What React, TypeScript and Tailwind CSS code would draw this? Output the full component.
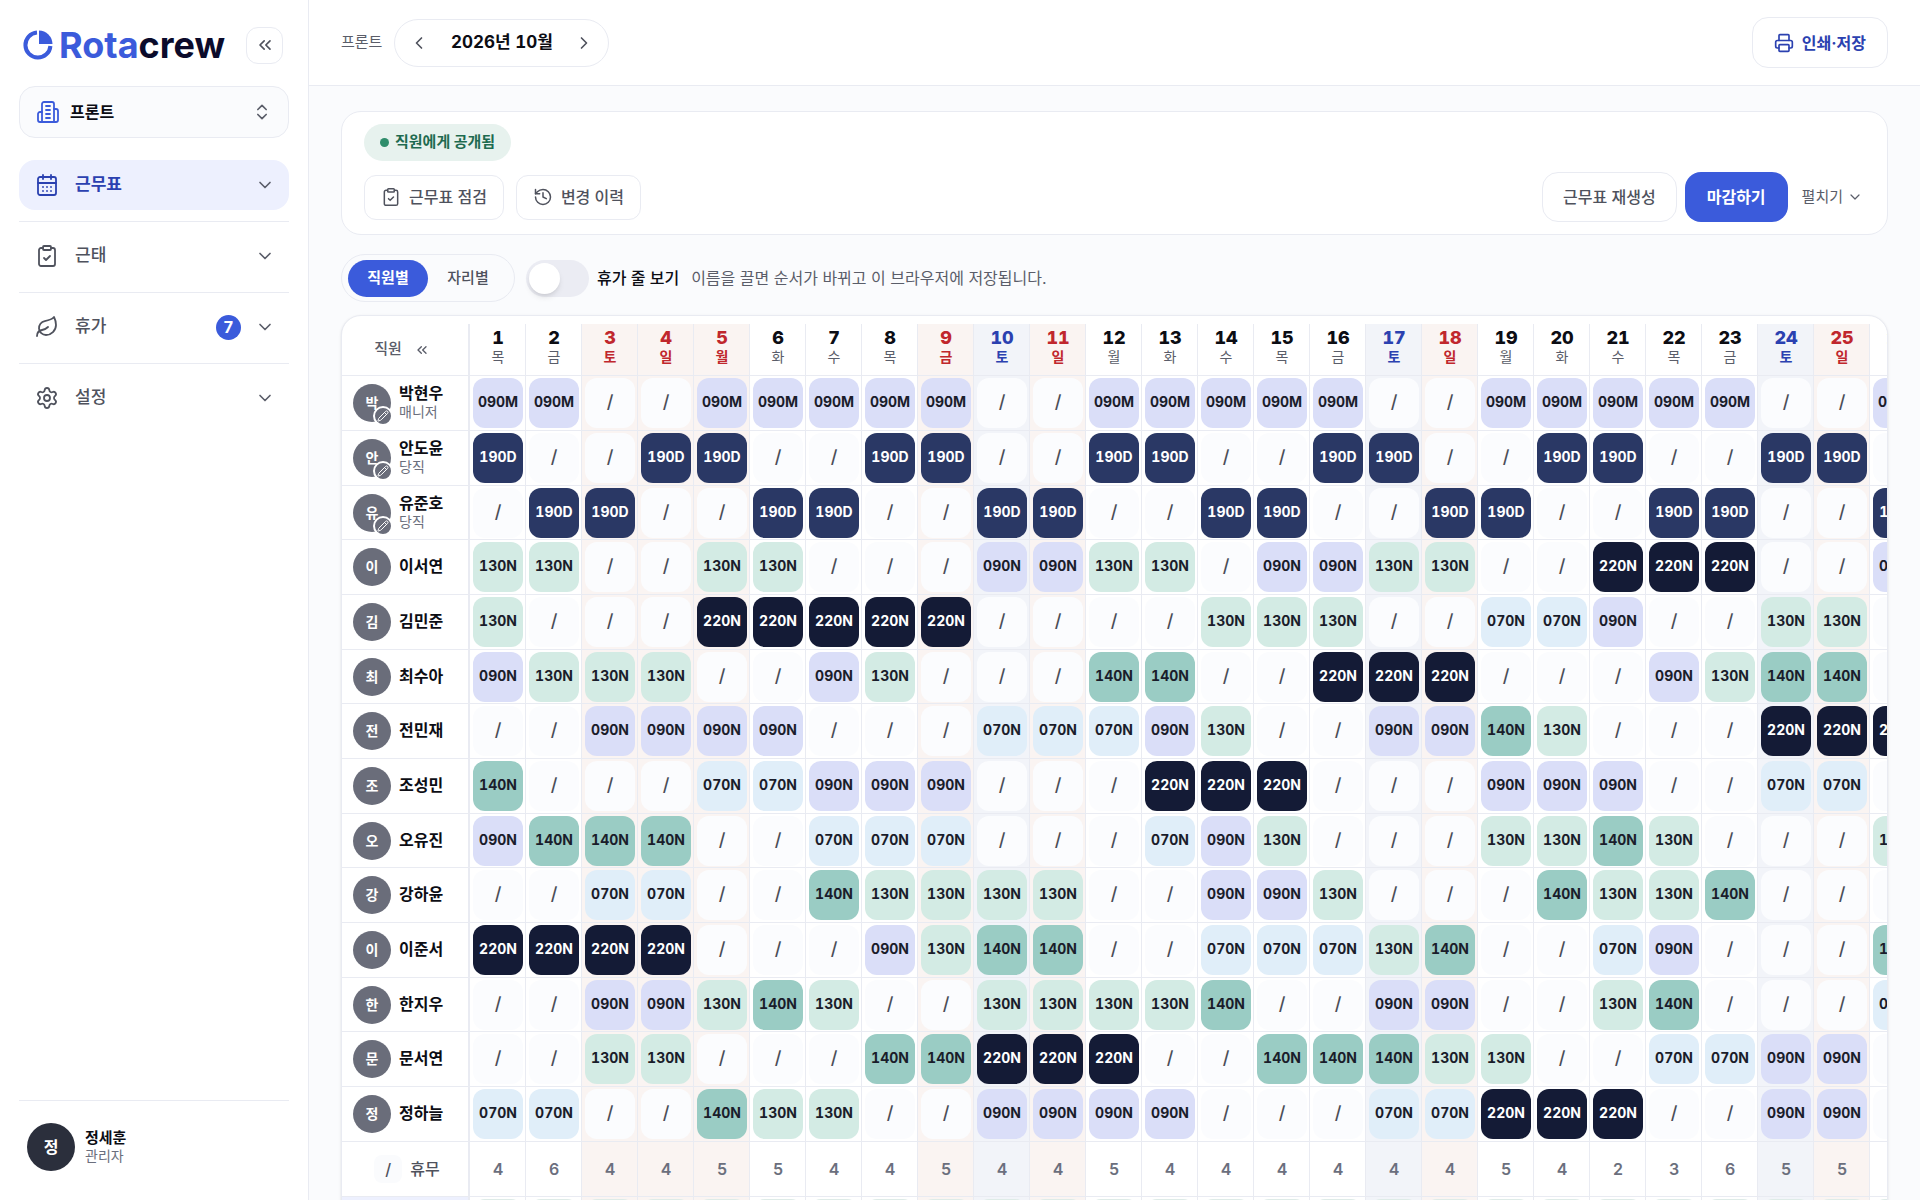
import { useState } from "react";
import clsx from "clsx";
import {
  CalendarDays,
  ChevronDown,
  ChevronLeft,
  ChevronRight,
  ChevronsLeft,
  ChevronsUpDown,
  ClipboardCheck,
  History,
  Leaf,
  Pencil,
  Printer,
  Settings,
} from "lucide-react";

const SHIFTS: Record<string, { code: string; className: string }> = {
  ".": { code: "/", className: "bg-[#fbfcfe] text-lg font-medium text-[#4b4e58]" },
  M: { code: "090M", className: "bg-[#dadef8] text-sm font-bold text-[#1a1d2b]" },
  "9": { code: "090N", className: "bg-[#dadef8] text-sm font-bold text-[#1a1d2b]" },
  "7": { code: "070N", className: "bg-[#e0eef9] text-sm font-bold text-[#1a1d2b]" },
  "3": { code: "130N", className: "bg-[#d3ebe4] text-sm font-bold text-[#1a1d2b]" },
  "4": { code: "140N", className: "bg-[#9accc4] text-sm font-bold text-[#1a1d2b]" },
  D: { code: "190D", className: "bg-[#2a3865] text-sm font-bold text-white" },
  "2": { code: "220N", className: "bg-[#141b36] text-sm font-bold text-white" },
};

const STAFF = [
  { name: "박현우", role: "매니저", shifts: "MM..MMMMM..MMMMM..MMMMM..M" },
  { name: "안도윤", role: "당직", shifts: "D..DD..DD..DD..DD..DD..DD." },
  { name: "유준호", role: "당직", shifts: ".DD..DD..DD..DD..DD..DD..D" },
  { name: "이서연", shifts: "33..33...9933.9933..222..9" },
  { name: "김민준", shifts: "3...22222....333..779..33." },
  { name: "최수아", shifts: "9333..93...44..222...9344." },
  { name: "전민재", shifts: "..9999...77793..9943...222" },
  { name: "조성민", shifts: "4...77999...222...999..77." },
  { name: "오유진", shifts: "9444..777...793...3343...3" },
  { name: "강하윤", shifts: "..77..43333..993...4334..." },
  { name: "이준서", shifts: "2222...9344..77734..79...4" },
  { name: "한지우", shifts: "..99343..33334..99..34...7" },
  { name: "문서연", shifts: "..33...44222..44433..7799." },
  { name: "정하늘", shifts: "77..433..9999...77222..99." },
];

const OFF_COUNTS = "46445544544544444454236555".split("");

const WEEKDAYS = ["목", "금", "토", "일", "월", "화", "수"];
const HOLIDAYS = [3, 4, 5, 9, 11, 18, 25];
const SATURDAYS = [10, 17, 24];
const DAYS = Array.from({ length: 26 }, (_, i) => i + 1);

const NAV = [
  { label: "근무표", icon: CalendarDays, active: true },
  { label: "근태", icon: ClipboardCheck },
  { label: "휴가", icon: Leaf, badge: 7 },
  { label: "설정", icon: Settings },
];

function dayTint(day: number) {
  if (HOLIDAYS.includes(day)) return "bg-[#faf4f2]";
  if (SATURDAYS.includes(day)) return "bg-[#f2f4f9]";
  return "bg-white";
}

function LogoMark() {
  return (
    <svg viewBox="0 0 30 30" className="size-[30px] shrink-0" aria-hidden="true">
      <path d="M14 2.6A12.5 12.5 0 1 0 27.4 16" fill="none" stroke="#3b5bdb" strokeWidth="4" />
      <path d="M16 0.5A14 14 0 0 1 29.5 14H16Z" fill="#3b5bdb" />
    </svg>
  );
}

function BuildingIcon() {
  return (
    <svg
      viewBox="0 0 24 24"
      className="size-6 shrink-0 text-[#3b5bdb]"
      fill="none"
      stroke="currentColor"
      strokeWidth="1.8"
      strokeLinecap="round"
      strokeLinejoin="round"
      aria-hidden="true"
    >
      <path d="M6 22V4a2 2 0 0 1 2-2h8a2 2 0 0 1 2 2v18Z" />
      <path d="M6 12H4a2 2 0 0 0-2 2v6a2 2 0 0 0 2 2h2" />
      <path d="M18 9h2a2 2 0 0 1 2 2v9a2 2 0 0 1-2 2h-2" />
      <path d="M10 6h4M10 10h4M10 14h4M10 18h4" />
    </svg>
  );
}

function Sidebar() {
  return (
    <aside className="flex w-[309px] shrink-0 flex-col border-r border-[#e9ebf2] bg-white px-[19px]">
      <div className="flex h-[86px] items-center justify-between pt-1 pr-1.5 pl-1">
        <a href="#" className="flex items-center gap-1.5">
          <LogoMark />
          <span className="text-4xl font-bold text-[#0b0b2b]">
            <span className="text-[#3b5bdb]">Rota</span>crew
          </span>
        </a>
        <button
          type="button"
          aria-label="사이드바 접기"
          className="flex size-[37px] shrink-0 items-center justify-center rounded-xl border border-[#e9ebf2] text-[#4f525d]"
        >
          <ChevronsLeft size={20} strokeWidth={2} />
        </button>
      </div>

      <label className="flex h-[52px] items-center gap-2.5 rounded-2xl border border-[#e9ebf2] bg-[#fafbfd] px-4">
        <BuildingIcon />
        <select
          aria-label="부서"
          className="min-w-0 flex-1 appearance-none bg-transparent text-base font-bold text-[#0c0d14]"
        >
          <option>프론트</option>
        </select>
        <ChevronsUpDown size={20} strokeWidth={2} className="text-[#5a5d69]" />
      </label>

      <nav className="mt-[22px]">
        {NAV.map(({ label, icon: Icon, active, badge }) => (
          <div key={label} className="mb-[11px] border-t border-[#e9ebf2] pt-[9px] first:border-0 first:pt-0">
            <button
              type="button"
              className={clsx(
                "flex h-[50px] w-full items-center rounded-2xl px-4 text-[17px]",
                active ? "bg-[#edf0fe] font-bold text-[#2b41b0]" : "font-medium text-[#4f525d]",
              )}
            >
              <Icon size={24} strokeWidth={1.8} />
              <span className="ml-4 flex-1 text-left">{label}</span>
              {badge && (
                <span className="mr-3.5 flex size-[25px] items-center justify-center rounded-full bg-[#3b5bdb] text-base font-bold text-white">
                  {badge}
                </span>
              )}
              <ChevronDown size={20} strokeWidth={2} className="mr-[-2px] text-[#5a5d69]" />
            </button>
          </div>
        ))}
      </nav>

      <div className="mt-auto flex h-[100px] items-center gap-2.5 border-t border-[#e9ebf2] px-2 pb-2">
        <span className="flex size-12 items-center justify-center rounded-full bg-[#2b2f3c] text-base font-bold text-white">
          정
        </span>
        <span className="flex flex-col">
          <span className="text-[15px]/[18px] font-bold text-[#0c0d14]">정세훈</span>
          <span className="text-sm/[18px] text-[#6b6f7d]">관리자</span>
        </span>
      </div>
    </aside>
  );
}

function Topbar() {
  return (
    <header className="flex h-[86px] shrink-0 items-center border-b border-[#e9ebf2] bg-white px-8">
      <span className="text-[15px] text-[#5a5d69]">프론트</span>
      <div className="ml-3 flex h-12 items-center rounded-full border border-[#e9ebf2] px-3.5">
        <button type="button" aria-label="이전 달" className="text-[#4f525d]">
          <ChevronLeft size={20} strokeWidth={2} />
        </button>
        <span className="w-[145px] text-center text-[17px] font-bold text-[#0c0d14] tabular-nums">
          2026년 10월
        </span>
        <button type="button" aria-label="다음 달" className="text-[#4f525d]">
          <ChevronRight size={20} strokeWidth={2} />
        </button>
      </div>
      <button
        type="button"
        className="ml-auto flex h-[51px] items-center gap-2 rounded-2xl border border-[#e9ebf2] px-[21px] text-base font-bold text-[#2b41b0]"
      >
        <Printer size={20} strokeWidth={2} />
        인쇄·저장
      </button>
    </header>
  );
}

function StatusCard() {
  const small =
    "flex h-[45px] items-center gap-2 rounded-xl border border-[#e9ebf2] px-4 text-base font-medium text-[#4f525d]";
  return (
    <section className="rounded-[20px] border border-[#e9ebf2] bg-white px-[22px] py-3">
      <div className="flex">
        <div className="flex h-[37px] items-center gap-1.5 rounded-full bg-[#e7f2ee] px-4 text-[15px] font-bold text-[#1e6b50]">
          <span className="size-[9px] rounded-full bg-[#2f8d6b]" />
          직원에게 공개됨
        </div>
      </div>
      <div className="mt-[11px] flex items-center justify-between">
        <div className="flex gap-3">
          <button type="button" className={small}>
            <ClipboardCheck size={20} strokeWidth={1.8} />
            근무표 점검
          </button>
          <button type="button" className={small}>
            <History size={20} strokeWidth={1.8} />
            변경 이력
          </button>
        </div>
        <div className="flex items-center gap-2">
          <button
            type="button"
            className="h-[50px] rounded-2xl border border-[#e9ebf2] px-5 text-base font-medium text-[#4f525d]"
          >
            근무표 재생성
          </button>
          <button type="button" className="h-[50px] rounded-2xl bg-[#3b5bdb] px-[22px] text-base font-bold text-white">
            마감하기
          </button>
          <button type="button" className="flex items-center gap-1 pr-0.5 pl-1.5 text-[15px] text-[#5a5d69]">
            펼치기
            <ChevronDown size={16} strokeWidth={1.8} />
          </button>
        </div>
      </div>
    </section>
  );
}

function ViewOptions() {
  const [view, setView] = useState("직원별");
  return (
    <div className="mt-[19px] flex items-center">
      <div className="flex h-12 items-center rounded-full border border-[#e9ebf2] bg-[#fafbfd] px-1.5">
        {["직원별", "자리별"].map((label) => (
          <button
            key={label}
            type="button"
            aria-pressed={view === label}
            onClick={() => setView(label)}
            className={clsx(
              "h-[37px] w-20 rounded-full text-[15px]",
              view === label ? "bg-[#3b5bdb] font-bold text-white" : "font-medium text-[#4f525d]",
            )}
          >
            {label}
          </button>
        ))}
      </div>
      <input
        id="leave-rows"
        type="checkbox"
        role="switch"
        className="ml-[11px] h-[37px] w-[63px] appearance-none rounded-full bg-[#ebecf3] p-[3px] before:block before:size-[31px] before:rounded-full before:bg-white before:shadow-md checked:bg-[#3b5bdb] checked:before:ml-auto"
      />
      <label htmlFor="leave-rows" className="ml-2 text-base font-medium text-[#0c0d14]">
        휴가 줄 보기
      </label>
      <p className="ml-3 text-base text-[#5a5d69]">이름을 끌면 순서가 바뀌고 이 브라우저에 저장됩니다.</p>
    </div>
  );
}

function Avatar({ name, editable }: { name: string; editable: boolean }) {
  return (
    <span className="relative flex size-[38px] shrink-0 items-center justify-center rounded-full bg-[#6a6d7a] text-sm font-bold text-white">
      {name[0]}
      {editable && (
        <span className="absolute -right-0.5 -bottom-1 flex size-5 items-center justify-center rounded-full border-2 border-white bg-[#6a6d7a]">
          <Pencil size={12} strokeWidth={2} />
        </span>
      )}
    </span>
  );
}

function Roster() {
  return (
    <section className="mt-[13px] overflow-hidden rounded-[20px] border border-[#e9ebf2] bg-white pt-2 shadow-sm">
      <table className="w-[1584px] table-fixed border-separate border-spacing-0">
        <colgroup>
          <col className="w-32" />
          {DAYS.map((day) => (
            <col key={day} className="w-14" />
          ))}
        </colgroup>
        <thead>
          <tr className="h-[52px]">
            <th className="border-r-2 border-b border-[#e9ebf2] p-0 pr-1.5 text-[15px] font-medium text-[#5a5d69]">
              <span className="flex items-center justify-center gap-3">
                직원
                <button type="button" aria-label="직원 열 접기">
                  <ChevronsLeft size={16} strokeWidth={2} />
                </button>
              </span>
            </th>
            {DAYS.map((day) => {
              const holiday = HOLIDAYS.includes(day);
              const saturday = SATURDAYS.includes(day);
              return (
                <th
                  key={day}
                  className={clsx(
                    "border-r border-b border-[#e9ebf2] p-0 pb-1.5 pl-px",
                    dayTint(day),
                    holiday && "text-[#c0272d]",
                    saturday && "text-[#2b41b0]",
                  )}
                >
                  <span
                    className={clsx(
                      "block text-lg/5 font-extrabold tabular-nums",
                      !holiday && !saturday && "text-[#0c0d14]",
                    )}
                  >
                    {day}
                  </span>
                  <span
                    className={clsx(
                      "block text-sm/[18px]",
                      holiday || saturday ? "font-semibold" : "font-normal text-[#5a5d69]",
                    )}
                  >
                    {WEEKDAYS[(day - 1) % 7]}
                  </span>
                </th>
              );
            })}
          </tr>
        </thead>
        <tbody>
          {STAFF.map(({ name, role, shifts }) => (
            <tr key={name} className="h-[55px] nth-[3n]:h-[54px]">
              <th className="border-r-2 border-b border-[#e9ebf2] p-0 pl-[11px]">
                <span className="flex items-center gap-2 text-left">
                  <Avatar name={name} editable={Boolean(role)} />
                  <span className="flex flex-col pb-0.5">
                    <span className="text-base/5 font-bold text-[#0c0d14]">{name}</span>
                    {role && <span className="text-sm/[18px] font-normal text-[#6b6f7d]">{role}</span>}
                  </span>
                </span>
              </th>
              {DAYS.map((day) => {
                const shift = SHIFTS[shifts[day - 1]];
                return (
                  <td key={day} className={clsx("border-r border-b border-[#e9ebf2] p-0 pl-px", dayTint(day))}>
                    <button
                      type="button"
                      className={clsx(
                        "mx-auto flex size-[50px] items-center justify-center rounded-xl pb-0.5 tabular-nums",
                        shift.className,
                      )}
                    >
                      {shift.code}
                    </button>
                  </td>
                );
              })}
            </tr>
          ))}
          <tr className="h-[55px]">
            <th className="border-r-2 border-b border-[#e9ebf2] p-0 pl-1">
              <span className="flex items-center justify-center gap-2 text-base font-medium text-[#4f525d]">
                <span className="flex size-7 items-center justify-center rounded-lg bg-[#fafbfd]">/</span>
                휴무
              </span>
            </th>
            {DAYS.map((day) => (
              <td
                key={day}
                className={clsx(
                  "border-r border-b border-[#e9ebf2] p-0 pl-px text-center text-base font-semibold text-[#6b6f7d]",
                  dayTint(day),
                )}
              >
                {OFF_COUNTS[day - 1]}
              </td>
            ))}
          </tr>
          <tr className="h-[55px]">
            <th className="border-r-2 border-b border-[#e9ebf2] bg-[#edf0fe] p-0" />
            {DAYS.map((day) => (
              <td key={day} className={clsx("border-r border-b border-[#e9ebf2] p-0 pl-px", dayTint(day))}>
                <div className="mx-auto size-[50px] rounded-xl bg-[#deebe7]" />
              </td>
            ))}
          </tr>
        </tbody>
      </table>
    </section>
  );
}

export default function App() {
  return (
    <div className="flex h-screen overflow-hidden bg-[#fafbfd] font-[Inter,'Noto_Sans_CJK_KR',sans-serif] text-[#0c0d14]">
      <Sidebar />
      <div className="flex min-w-0 flex-1 flex-col">
        <Topbar />
        <main className="min-h-0 flex-1 overflow-hidden px-8 pt-[25px]">
          <StatusCard />
          <ViewOptions />
          <Roster />
        </main>
      </div>
    </div>
  );
}
